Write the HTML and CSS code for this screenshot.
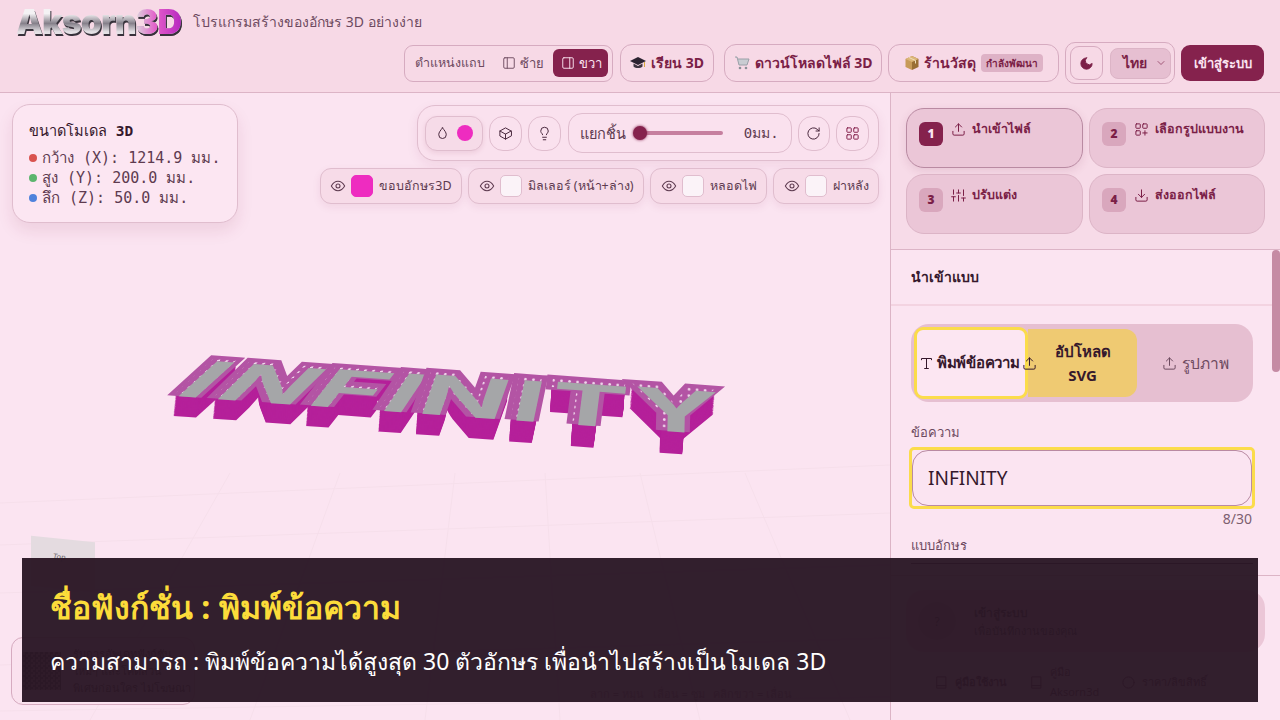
FILE: index.html
```html
<!DOCTYPE html>
<html lang="th">
<head>
    <meta charset="UTF-8">
    <meta name="viewport" content="width=device-width, initial-scale=1.0">
    <title>Aksorn3D</title>
    <link rel="stylesheet" href="styles.css">
</head>
<body>
    <header class="topbar">
        <div class="brand">
            <span class="logo">Aksorn<span class="logo-3d">3D</span></span>
            <span class="tagline">โปรแกรมสร้างของอักษร 3D อย่างง่าย</span>
        </div>
        <div class="top-actions">
            <div class="side-group">
                <span class="side-label">ตำแหน่งแถบ</span>
                <span class="side-btn">
                    <svg class="icon" viewBox="0 0 24 24"><rect x="3" y="3" width="18" height="18" rx="2"/><path d="M9 3v18"/></svg>ซ้าย
                </span>
                <span class="side-btn active">
                    <svg class="icon" viewBox="0 0 24 24"><rect x="3" y="3" width="18" height="18" rx="2"/><path d="M15 3v18"/></svg>ขวา
                </span>
            </div>
            <a class="top-link learn">
                <svg class="pic" viewBox="0 0 16 16"><path d="M0 6l8-4 8 4-8 4z" fill="#2b2230"/><path d="M3.500 8.500v3c2 2 7 2 9 0v-3L8 11z" fill="#3d3440"/><path d="M14.500 7v5" stroke="#d9a93a" stroke-width="1"/></svg>
                เรียน 3D
            </a>
            <a class="top-link download">
                <svg class="pic" viewBox="0 0 16 16"><path d="M1 2h2l2 8h8l2-6H4" fill="#c9ccd2" stroke="#9aa0a8" stroke-width="1"/><circle cx="6" cy="13" r="1.300" fill="#8b8f96"/><circle cx="12" cy="13" r="1.300" fill="#8b8f96"/></svg>
                ดาวน์โหลดไฟล์ 3D
            </a>
            <a class="top-link shop">
                <svg class="pic" viewBox="0 0 16 16"><path d="M8 1l6.500 3v8L8 15z" fill="#9a6f35"/><path d="M8 1L1.500 4v8L8 15z" fill="#c79a58"/><path d="M8 7L1.500 4 8 1l6.500 3z" fill="#dcb678"/><path d="M5 2.500l6.500 3v3" stroke="#f0dfb8" fill="none"/></svg>
                ร้านวัสดุ <span class="soon">กำลังพัฒนา</span>
            </a>
            <div class="lang-group">
                <span class="theme-btn">
                    <svg class="icon moon" viewBox="0 0 24 24"><path d="M12 3a6 6 0 0 0 9 9 9 9 0 1 1-9-9z"/></svg>
                </span>
                <span class="lang-select">ไทย
                    <svg class="icon chev" viewBox="0 0 24 24"><path d="M6 9l6 6 6-6"/></svg>
                </span>
            </div>
            <a class="login-btn">เข้าสู่ระบบ</a>
        </div>
    </header>

    <div class="workspace">
        <main class="viewport">
            <svg class="floor" viewBox="0 0 890 627" preserveAspectRatio="none">
                <path d="M0 410L890 372M0 452L890 420M0 500L890 472M0 572L890 545M0 618L890 604M90 627L230 380M250 627L340 380M425 627L455 380M560 627L545 380M700 627L640 380M850 627L745 380"/>
            </svg>

            <div class="model">
                <div class="model-word">
                    <span class="ltr" data-c="I" style="--t: 0.31; --h: 1">I</span>
                    <span class="ltr" data-c="N" style="--t: 0.29; --h: 1">N</span>
                    <span class="ltr" data-c="F" style="--t: 0.23; --h: 1.02">F</span>
                    <span class="ltr" data-c="I" style="--t: 0.2; --h: 1.04">I</span>
                    <span class="ltr" data-c="N" style="--t: 0.1; --h: 1.06">N</span>
                    <span class="ltr" data-c="I" style="--t: 0.05; --h: 1.08">I</span>
                    <span class="ltr" data-c="T" style="--t: 0.02; --h: 1.1">T</span>
                    <span class="ltr" data-c="Y" style="--t: -0.02; --h: 1.12">Y</span>
                </div>
            </div>

            <div class="gizmo"><span>Top</span></div>

            <section class="size-card">
                <h3>ขนาดโมเดล <b>3D</b></h3>
                <p><i class="dot red"></i>กว้าง (X): 1214.9 มม.</p>
                <p><i class="dot green"></i>สูง (Y): 200.0 มม.</p>
                <p><i class="dot blue"></i>ลึก (Z): 50.0 มม.</p>
            </section>

            <div class="view-tools">
                <div class="toolbar">
                    <span class="tool color-tool">
                        <svg class="icon" viewBox="0 0 24 24"><path d="M12 3c3 4 6 7 6 11a6 6 0 0 1-12 0c0-4 3-7 6-11z"/></svg>
                        <i class="color-dot"></i>
                    </span>
                    <span class="tool round">
                        <svg class="icon" viewBox="0 0 24 24"><path d="M21 8l-9-5-9 5v8l9 5 9-5z"/><path d="M3 8l9 5 9-5M12 13v8"/></svg>
                    </span>
                    <span class="tool round">
                        <svg class="icon" viewBox="0 0 24 24"><path d="M15 14c.2-1 .7-1.700 1.500-2.500A5.500 5.500 0 0 0 18 8 6 6 0 0 0 6 8c0 1 .2 2.200 1.500 3.500.7.700 1.300 1.500 1.500 2.500"/><path d="M9 18h6M10 22h4"/></svg>
                    </span>
                    <div class="explode">
                        <span class="explode-label">แยกชิ้น</span>
                        <span class="slider"><i class="thumb"></i></span>
                        <span class="explode-value">0มม.</span>
                    </div>
                    <span class="tool round">
                        <svg class="icon" viewBox="0 0 24 24"><path d="M21 12a9 9 0 1 1-3-6.700L21 8"/><path d="M21 3v5h-5"/></svg>
                    </span>
                    <span class="tool round grid-tool">
                        <svg class="icon plum" viewBox="0 0 24 24"><rect x="3" y="3" width="7" height="7" rx="1"/><rect x="14" y="3" width="7" height="7" rx="1"/><rect x="3" y="14" width="7" height="7" rx="1"/><rect x="14" y="14" width="7" height="7" rx="1"/></svg>
                    </span>
                </div>
                <div class="layers">
                    <span class="chip">
                        <svg class="icon" viewBox="0 0 24 24"><path d="M2 12s4-7 10-7 10 7 10 7-4 7-10 7-10-7-10-7z"/><circle cx="12" cy="12" r="3"/></svg>
                        <i class="swatch pink"></i>ขอบอักษร3D
                    </span>
                    <span class="chip">
                        <svg class="icon" viewBox="0 0 24 24"><path d="M2 12s4-7 10-7 10 7 10 7-4 7-10 7-10-7-10-7z"/><circle cx="12" cy="12" r="3"/></svg>
                        <i class="swatch"></i>มิลเลอร์ (หน้า+ล่าง)
                    </span>
                    <span class="chip">
                        <svg class="icon" viewBox="0 0 24 24"><path d="M2 12s4-7 10-7 10 7 10 7-4 7-10 7-10-7-10-7z"/><circle cx="12" cy="12" r="3"/></svg>
                        <i class="swatch"></i>หลอดไฟ
                    </span>
                    <span class="chip">
                        <svg class="icon" viewBox="0 0 24 24"><path d="M2 12s4-7 10-7 10 7 10 7-4 7-10 7-10-7-10-7z"/><circle cx="12" cy="12" r="3"/></svg>
                        <i class="swatch"></i>ฝาหลัง
                    </span>
                </div>
            </div>

            <div class="promo-card">
                <div class="qr"></div>
                <p>รับการอัพเดทฟังก์ชัน<br>ใหม่ๆ และโค้ดส่วน<br>พิเศษก่อนใคร ไม่โฆษณา</p>
            </div>
            <p class="hint">ลาก = หมุน &nbsp; เลื่อน = ซูม &nbsp; คลิกขวา = เลื่อน</p>
        </main>

        <aside class="sidebar">
            <div class="steps">
                <div class="step current">
                    <b class="step-no">1</b>
                    <svg class="icon" viewBox="0 0 24 24"><path d="M12 15V3M7 8l5-5 5 5M21 15v4a2 2 0 0 1-2 2H5a2 2 0 0 1-2-2v-4"/></svg>
                    <span>นำเข้าไฟล์</span>
                </div>
                <div class="step">
                    <b class="step-no">2</b>
                    <svg class="icon" viewBox="0 0 24 24"><rect x="3" y="3" width="7" height="7" rx="1"/><rect x="14" y="3" width="7" height="7" rx="1"/><rect x="3" y="14" width="7" height="7" rx="1"/><path d="M14 17.500h7M17.500 14v7"/></svg>
                    <span>เลือกรูปแบบงาน</span>
                </div>
                <div class="step">
                    <b class="step-no">3</b>
                    <svg class="icon" viewBox="0 0 24 24"><path d="M4 21v-7M4 10V3M12 21v-9M12 8V3M20 21v-5M20 12V3M1 14h6M9 8h6M17 16h6"/></svg>
                    <span>ปรับแต่ง</span>
                </div>
                <div class="step">
                    <b class="step-no">4</b>
                    <svg class="icon" viewBox="0 0 24 24"><path d="M12 3v12M7 10l5 5 5-5M21 15v4a2 2 0 0 1-2 2H5a2 2 0 0 1-2-2v-4"/></svg>
                    <span>ส่งออกไฟล์</span>
                </div>
            </div>

            <div class="panel">
                <div class="scroll-thumb"></div>
                <h2 class="panel-title">นำเข้าแบบ</h2>
                <div class="panel-body">
                    <div class="tabs">
                        <span class="tab typed">
                            <svg class="icon serif" viewBox="0 0 24 24"><path d="M4 6V4h16v2M12 4v16M9 20h6"/></svg>
                            พิมพ์ข้อความ
                        </span>
                        <span class="tab svg-tab">
                            <svg class="icon tab-up" viewBox="0 0 24 24"><path d="M12 15V3M7 8l5-5 5 5M21 15v4a2 2 0 0 1-2 2H5a2 2 0 0 1-2-2v-4"/></svg>
                            <span>อัปโหลด<br>SVG</span>
                        </span>
                        <span class="tab image-tab">
                            <svg class="icon" viewBox="0 0 24 24"><path d="M12 15V3M7 8l5-5 5 5M21 15v4a2 2 0 0 1-2 2H5a2 2 0 0 1-2-2v-4"/></svg>
                            รูปภาพ
                        </span>
                    </div>
                    <label class="field-label">ข้อความ</label>
                    <div class="input-focus">
                        <div class="text-input">INFINITY</div>
                    </div>
                    <div class="counter">8/30</div>
                    <label class="field-label font-label">แบบอักษร</label>
                    <div class="font-select"></div>
                </div>
            </div>

            <div class="account">
                <div class="login-card">
                    <span class="avatar">?</span>
                    <div>
                        <b>เข้าสู่ระบบ</b>
                        <small>เพื่อบันทึกงานของคุณ</small>
                    </div>
                </div>
                <div class="account-links">
                    <span class="acc-link strong">
                        <svg class="icon" viewBox="0 0 24 24"><path d="M5 3h14v18H5zM5 17h14"/></svg>
                        คู่มือใช้งาน
                    </span>
                    <span class="acc-link">
                        <svg class="icon" viewBox="0 0 24 24"><path d="M5 3h14v18H5zM5 17h14"/></svg>
                        <span>คู่มือ<br>Aksorn3d</span>
                    </span>
                    <span class="acc-link">
                        <svg class="icon" viewBox="0 0 24 24"><circle cx="12" cy="12" r="9"/></svg>
                        ราคา/ลิขสิทธิ์
                    </span>
                </div>
            </div>
        </aside>
    </div>

    <div class="caption">
        <h1>ชื่อฟังก์ชั่น : พิมพ์ข้อความ</h1>
        <p>ความสามารถ : พิมพ์ข้อความได้สูงสุด 30 ตัวอักษร เพื่อนำไปสร้างเป็นโมเดล 3D</p>
    </div>
</body>
</html>
```

FILE: styles.css
```css
* {
    box-sizing: border-box;
}

body {
    margin: 0;
    width: 1280px;
    height: 720px;
    overflow: hidden;
    position: relative;
    display: flex;
    flex-direction: column;
    background-color: #fbe4f1;
    color: #35182c;
    font-family: "Noto Sans", "Open Sans", sans-serif;
}

.icon {
    width: 15px;
    height: 15px;
    flex: none;
    fill: none;
    stroke: currentColor;
    stroke-width: 1.6;
    stroke-linecap: round;
    stroke-linejoin: round;
}

.pic {
    width: 16px;
    height: 16px;
    flex: none;
}

/* top bar */
.topbar {
    height: 93px;
    flex: none;
    padding: 8px 16px 0 16px;
    background-color: #f7d9e6;
    border-bottom: 1px solid #dcb4c6;
}

.brand {
    display: flex;
    align-items: center;
    gap: 11px;
    height: 28px;
}

.logo {
    width: 166px;
    font-family: "Inter", "Liberation Sans", sans-serif;
    font-size: 34px;
    font-weight: 900;
    letter-spacing: -1px;
    line-height: 28px;
    white-space: nowrap;
    color: #d8d6da;
    background: linear-gradient(180deg, #f4f2f4 20%, #85808a 55%, #e3e0e4 85%);
    -webkit-background-clip: text;
    background-clip: text;
    -webkit-text-fill-color: transparent;
    filter: drop-shadow(1px 2px 0 #37323b);
}

.logo-3d {
    background: linear-gradient(90deg, #dcd3dc 0%, #e35bc9 45%, #b729c0 100%);
    -webkit-background-clip: text;
    background-clip: text;
    -webkit-text-fill-color: transparent;
}

.tagline {
    font-size: 14px;
    color: #6d4a5f;
}

.top-actions {
    display: flex;
    justify-content: flex-end;
    align-items: center;
    gap: 6px;
    margin-top: 6px;
}

.side-group {
    display: flex;
    align-items: center;
    width: 209px;
    height: 37px;
    padding: 0 4px 0 10px;
    border: 1px solid #d6abc0;
    border-radius: 9px;
    font-size: 13px;
    color: #6d4a5f;
    white-space: nowrap;
}

.side-label {
    width: 72px;
    margin-right: 13px;
    font-size: 12.500px;
}

.side-btn {
    display: flex;
    align-items: center;
    gap: 4px;
    height: 28px;
    padding: 0 6px 0 2px;
    border-radius: 6px;
}

.side-btn .icon {
    width: 14px;
    height: 14px;
}

.side-btn.active {
    margin-left: auto;
    padding: 0 6px 0 8px;
    background-color: #85224d;
    color: #fbe4f1;
}

.top-link {
    display: flex;
    align-items: center;
    justify-content: center;
    gap: 5px;
    height: 38px;
    border: 1px solid #d6abc0;
    border-radius: 12px;
    font-size: 14px;
    font-weight: 700;
    color: #7b1f47;
}

.learn {
    width: 94px;
    margin-left: 1px;
}

.download {
    width: 158px;
    margin-left: 4px;
}

.shop {
    width: 171px;
    gap: 4px;
}

.soon {
    margin-left: 1px;
    padding: 2px 5px;
    border-radius: 4px;
    background-color: #deb2c6;
    font-size: 10px;
    line-height: 14px;
}

.lang-group {
    display: flex;
    align-items: center;
    gap: 7px;
    width: 110px;
    height: 42px;
    padding: 0 3px 0 4px;
    border: 1px solid #d6abc0;
    border-radius: 10px;
}

.theme-btn {
    display: flex;
    align-items: center;
    justify-content: center;
    width: 33px;
    height: 34px;
    border: 1px solid #d6abc0;
    border-radius: 9px;
}

.moon {
    fill: #7b1f47;
    stroke: #7b1f47;
    color: #7b1f47;
}

.lang-select {
    display: flex;
    align-items: center;
    justify-content: space-between;
    width: 62px;
    height: 31px;
    padding: 0 3px 0 12px;
    border: 1px solid #dcb4c6;
    border-radius: 8px;
    background-color: #e6bfd1;
    font-size: 14px;
    font-weight: 700;
    color: #7b1f47;
}

.chev {
    width: 12px;
    height: 12px;
    stroke-width: 1.300;
}

.login-btn {
    display: flex;
    align-items: center;
    justify-content: center;
    width: 83px;
    height: 36px;
    border-radius: 9px;
    background-color: #85224d;
    color: #fbe4f1;
    font-size: 13px;
    font-weight: 700;
}

/* main area */
.workspace {
    flex: 1;
    display: flex;
    min-height: 0;
}

.viewport {
    flex: 1;
    position: relative;
    overflow: hidden;
    background-color: #fbe4f1;
}

.floor {
    position: absolute;
    left: 0;
    top: 0;
    width: 100%;
    height: 100%;
    fill: none;
    stroke: #f6dfeb;
    stroke-width: 1;
}

/* the rendered model: one real letter per span, each leaning its own way */
.model {
    position: absolute;
    left: 0;
    top: 0;
    width: 890px;
    height: 627px;
}

.model-word {
    position: absolute;
    left: 162px;
    top: 249px;
    display: flex;
    gap: 6px;
    font-family: "Inter", "Liberation Sans", sans-serif;
    font-size: 100px;
    font-weight: 900;
    line-height: 120px;
    transform-origin: 0 0;
    transform: rotate(4.2deg) scale(1.15, 0.52);
}

.ltr {
    position: relative;
    display: block;
    color: #b354a4;
    -webkit-text-stroke: 10px #b354a4;
    transform-origin: 0 100%;
    transform: scaleY(var(--h)) skewX(calc(var(--t) * -75deg));
    text-shadow: calc(var(--t) * 2.7px) 2px 0 #b5209a, calc(var(--t) * 5.4px) 4px 0 #b5209a,
        calc(var(--t) * 8.1px) 6px 0 #b5209a, calc(var(--t) * 10.8px) 8px 0 #b5209a,
        calc(var(--t) * 13.5px) 10px 0 #b5209a, calc(var(--t) * 16.2px) 12px 0 #b5209a,
        calc(var(--t) * 18.9px) 14px 0 #b5209a, calc(var(--t) * 21.6px) 16px 0 #b5209a,
        calc(var(--t) * 24.3px) 18px 0 #b5209a, calc(var(--t) * 27px) 20px 0 #b5209a,
        calc(var(--t) * 29.7px) 22px 0 #b5209a, calc(var(--t) * 32.4px) 24px 0 #b5209a,
        calc(var(--t) * 35.1px) 26px 0 #b5209a, calc(var(--t) * 37.8px) 28px 0 #b5209a,
        calc(var(--t) * 40.5px) 30px 0 #b5209a, calc(var(--t) * 43.2px) 32px 0 #b5209a,
        calc(var(--t) * 45.9px) 34px 0 #b5209a, calc(var(--t) * 48.6px) 36px 0 #b5209a,
        calc(var(--t) * 51.3px) 38px 0 #b5209a, calc(var(--t) * 54px) 40px 0 #b5209a,
        calc(var(--t) * 56.7px) 42px 0 #b5209a, calc(var(--t) * 59.4px) 44px 0 #b5209a;
}

/* led dots on the rim */
.ltr::before {
    content: attr(data-c);
    position: absolute;
    left: 0;
    top: 0;
    color: transparent;
    -webkit-text-stroke: 0;
    text-shadow: none;
    background: radial-gradient(ellipse, #efd4ea 0 1px, transparent 1.6px) 0 0 / 7px 11px;
    -webkit-background-clip: text;
    background-clip: text;
}

.ltr::after {
    content: attr(data-c);
    position: absolute;
    left: 50%;
    top: 6px;
    transform: translateX(calc(-50% + 3px));
    font-weight: 700;
    color: #a5a6a8;
    -webkit-text-stroke: 0;
    text-shadow: none;
}

.gizmo {
    position: absolute;
    left: 31px;
    top: 446px;
    width: 64px;
    height: 50px;
    padding: 12px 0 0 22px;
    background-color: #e4dbe0;
    transform: skewY(6deg);
    font-size: 8px;
    font-style: italic;
    color: #6f6a6d;
}

.size-card {
    position: absolute;
    left: 12px;
    top: 11px;
    width: 226px;
    height: 119px;
    padding: 15px 16px;
    border: 1px solid #e0bdce;
    border-radius: 18px;
    background-color: #fce6f2;
    box-shadow: 0 8px 16px rgba(123, 31, 71, 0.1);
    font-family: "DejaVu Sans Mono", "Liberation Mono", monospace;
    font-size: 15px;
    line-height: 20px;
    color: #5e3b50;
}

.size-card h3 {
    margin: 0 0 6px 0;
    font-size: 14.500px;
    font-weight: 400;
    line-height: 22px;
    color: #35182c;
}

.size-card p {
    margin: 0;
    display: flex;
    align-items: center;
    white-space: pre;
}

.dot {
    width: 8px;
    height: 8px;
    margin-right: 5px;
    border-radius: 50%;
}

.dot.red {
    background-color: #d9534f;
}

.dot.green {
    background-color: #5cb56e;
}

.dot.blue {
    background-color: #4f82dc;
}

.view-tools {
    position: absolute;
    right: 11px;
    top: 12px;
    display: flex;
    flex-direction: column;
    align-items: flex-end;
    gap: 7px;
}

.toolbar {
    display: flex;
    align-items: center;
    gap: 6px;
    width: 462px;
    height: 56px;
    padding: 0 9px 0 7px;
    border: 1px solid #e0bdce;
    border-radius: 18px;
    background-color: #fae1ee;
    box-shadow: 0 4px 12px rgba(123, 31, 71, 0.08);
}

.tool {
    display: flex;
    align-items: center;
    justify-content: center;
    height: 35px;
    border: 1px solid #e0bdce;
    color: #4b2a3f;
}

.tool.round {
    width: 33px;
    border-radius: 14px;
}

.grid-tool {
    margin-left: auto;
}

.color-tool {
    gap: 7px;
    width: 59px;
    border-radius: 12px;
    background-color: #f6dbe8;
    box-shadow: 0 2px 5px rgba(123, 31, 71, 0.1);
}

.color-dot {
    width: 16px;
    height: 16px;
    border-radius: 50%;
    background-color: #ee2cc0;
}

.plum {
    color: #85224d;
}

.explode {
    display: flex;
    align-items: center;
    width: 226px;
    height: 40px;
    margin-left: 1px;
    padding: 0 12px 0 11px;
    border: 1px solid #e0bdce;
    border-radius: 14px;
    font-size: 14.500px;
    color: #5e3b50;
}

.slider {
    position: relative;
    width: 89px;
    height: 4px;
    margin-left: 8px;
    border-radius: 2px;
    background-color: #c67f9f;
}

.thumb {
    position: absolute;
    left: -1px;
    top: -5px;
    width: 14px;
    height: 14px;
    border-radius: 50%;
    background-color: #85224d;
    box-shadow: 0 0 3px #85224d;
}

.explode-value {
    margin-left: auto;
    font-family: "DejaVu Sans Mono", "Liberation Mono", monospace;
    font-size: 14px;
}

.layers {
    display: flex;
    gap: 6px;
}

.chip {
    display: flex;
    align-items: center;
    height: 36px;
    padding: 0 9.500px;
    border: 1px solid #e0bdce;
    border-radius: 11px;
    background-color: #f7dbe8;
    box-shadow: 0 3px 8px rgba(123, 31, 71, 0.08);
    font-size: 12.500px;
    white-space: nowrap;
    color: #5e3b50;
}

.chip .icon {
    width: 16px;
    height: 16px;
    margin-right: 5px;
}

.swatch {
    width: 22px;
    height: 22px;
    margin-right: 6px;
    border: 1px solid #e0bdce;
    border-radius: 5px;
    background-color: #fbf3f8;
}

.swatch.pink {
    border-color: #ee2cc0;
    background-color: #ee2cc0;
}

.promo-card {
    position: absolute;
    left: 11px;
    top: 544px;
    display: flex;
    align-items: flex-start;
    gap: 12px;
    width: 184px;
    height: 68px;
    padding: 7px 6px 0 11px;
    border: 1px solid #d6abc0;
    border-radius: 12px;
    background-color: #fae1ee;
    font-size: 11px;
}

.promo-card p {
    margin: 0;
    line-height: 17px;
    white-space: nowrap;
}

.qr {
    width: 38px;
    height: 38px;
    margin-top: 7px;
    flex: none;
    background: repeating-conic-gradient(#2d2028 0 25%, #8f8089 0 50%) 0 0 / 5px 5px;
}

.hint {
    position: absolute;
    left: 590px;
    top: 592px;
    margin: 0;
    font-size: 11px;
    color: #8c6c7e;
}

/* right side */
.sidebar {
    width: 390px;
    flex: none;
    display: flex;
    flex-direction: column;
    border-left: 1px solid #dcb4c6;
    background-color: #f7dbe8;
}

.steps {
    display: grid;
    grid-template-columns: 177px 176px;
    grid-auto-rows: 60px;
    gap: 6px;
    height: 157px;
    padding: 15px 0 0 15px;
    flex: none;
    border-bottom: 1px solid #dcb4c6;
}

.step {
    display: flex;
    align-items: flex-start;
    gap: 6px;
    padding: 13px 12px;
    border: 1px solid #dcb4c6;
    border-radius: 18px;
    background-color: #ebc6d7;
    font-size: 12.500px;
    font-weight: 700;
    line-height: 14px;
    color: #7b1f47;
}

.step.current {
    border-color: #b98aa2;
    box-shadow: 0 3px 10px rgba(123, 31, 71, 0.12);
}

.step-no {
    display: flex;
    align-items: center;
    justify-content: center;
    width: 24px;
    height: 24px;
    margin-right: 2px;
    flex: none;
    border-radius: 6px;
    background-color: #d9a7bd;
    font-size: 12px;
}

.current .step-no {
    background-color: #85224d;
    color: #fbe4f1;
}

.panel {
    flex: 1;
    position: relative;
    overflow: hidden;
    min-height: 0;
    background-color: #fbe4f1;
}

.scroll-thumb {
    position: absolute;
    right: 0;
    top: 0;
    width: 8px;
    height: 122px;
    border-radius: 4px;
    background-color: #c58ba4;
}

.panel-title {
    margin: 0;
    height: 56px;
    padding: 0 20px;
    display: flex;
    align-items: center;
    border-bottom: 2px solid #f3d3e1;
    font-size: 14px;
    font-weight: 700;
}

.panel-body {
    padding: 18px 27px 0 20px;
}

.tabs {
    display: flex;
    align-items: center;
    height: 78px;
    padding-left: 3px;
    border-radius: 18px;
    background-color: #e6bfd1;
}

.tab {
    display: flex;
    align-items: center;
    justify-content: center;
    height: 68px;
    font-size: 15px;
}

.typed {
    gap: 3px;
    width: 114px;
    height: 72px;
    padding-left: 2px;
    justify-content: flex-start;
    border: 3px solid #fbdc4b;
    border-radius: 9px;
    background-color: #fce6f2;
    font-size: 15px;
    font-weight: 700;
    letter-spacing: -0.3px;
    white-space: nowrap;
}

.svg-tab {
    position: relative;
    width: 109px;
    border-radius: 0 12px 12px 0;
    background-color: #efca72;
    text-align: center;
    line-height: 24px;
    font-weight: 700;
}

.tab-up {
    position: absolute;
    left: -6px;
    top: 27px;
}

.image-tab {
    flex: 1;
    gap: 5px;
    font-size: 15.500px;
    color: #6d4a5f;
}

.field-label {
    display: block;
    margin-top: 20px;
    font-size: 13px;
    line-height: 20px;
    color: #6d4a5f;
}

.input-focus {
    height: 62px;
    margin: 5px -2px 0 -2px;
    border: 3px solid #fbdc4b;
    border-radius: 5px;
}

.text-input {
    display: flex;
    align-items: center;
    height: 100%;
    padding: 0 15px;
    border: 1px solid #b98aa2;
    border-radius: 16px;
    font-size: 19px;
}

.counter {
    text-align: right;
    margin-top: 0;
    padding-right: 1px;
    font-size: 14px;
    line-height: 20px;
    color: #7d5f70;
}

.font-label {
    margin-top: 6px;
}

.font-select {
    height: 40px;
    margin-top: 8px;
    border-top: 1px solid #35182c;
}

.account {
    height: 145px;
    flex: none;
    padding: 14px 15px 0 15px;
    border-top: 1px solid #dcb4c6;
    background-color: #fbe4f1;
}

.login-card {
    display: flex;
    align-items: center;
    gap: 18px;
    height: 62px;
    padding: 0 12px;
    border-radius: 18px;
    background-color: #ebc6d7;
    font-size: 12px;
}

.login-card small {
    display: block;
    font-size: 11px;
}

.avatar {
    display: flex;
    align-items: center;
    justify-content: center;
    width: 38px;
    height: 38px;
    border-radius: 50%;
    background-color: #d9a7bd;
}

.account-links {
    display: flex;
    align-items: center;
    gap: 22px;
    margin-top: 10px;
    padding-left: 28px;
    font-size: 11px;
    line-height: 20px;
    white-space: nowrap;
}

.acc-link {
    display: flex;
    align-items: center;
    gap: 6px;
}

.strong {
    font-weight: 700;
}

/* caption strip lying over the app */
.caption {
    position: absolute;
    left: 22px;
    top: 558px;
    width: 1236px;
    height: 144px;
    padding: 26px 28px 0 28px;
    background-color: rgba(43, 24, 38, 0.97);
}

.caption h1 {
    margin: 0;
    font-size: 32px;
    font-weight: 700;
    line-height: 46px;
    color: #fcdc3a;
}

.caption p {
    margin: 14px 0 0 0;
    font-size: 23px;
    line-height: 34px;
    color: #fff;
}
```
